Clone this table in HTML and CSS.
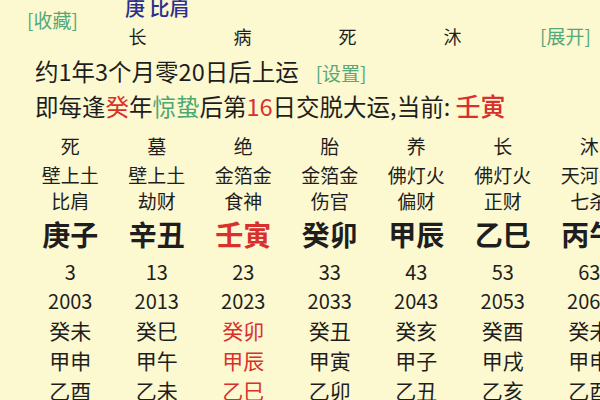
FILE: index.html
```html
<!DOCTYPE html>
<html lang="zh">
<head>
<meta charset="utf-8">
<link rel="stylesheet" href="styles.css">
</head>
<body>
<div class="page">
  <div class="head">
    <div class="fav">[收藏]</div>
    <div class="stem">庚 比肩</div>
    <div class="states">
      <span>长</span><span>病</span><span>死</span><span>沐</span>
    </div>
    <div class="expand">[展开]</div>
  </div>
  <div class="line1">约1年3个月零20日后上运<span class="set">[设置]</span></div>
  <div class="line2">即每逢<span class="red">癸</span>年<span class="green">惊蛰</span>后第<span class="red">16</span>日交脱大运,当前: <span class="cur">壬寅</span></div>
  <div class="grid">
    <div class="col">
      <div class="st">死</div><div class="ny">壁上土</div><div class="ss">比肩</div><div class="gz">庚子</div>
      <div class="num age">3</div><div class="num year">2003</div><div class="yr">癸未</div><div class="yr">甲申</div><div class="yr">乙酉</div>
    </div>
    <div class="col">
      <div class="st">墓</div><div class="ny">壁上土</div><div class="ss">劫财</div><div class="gz">辛丑</div>
      <div class="num age">13</div><div class="num year">2013</div><div class="yr">癸巳</div><div class="yr">甲午</div><div class="yr">乙未</div>
    </div>
    <div class="col now">
      <div class="st">绝</div><div class="ny">金箔金</div><div class="ss">食神</div><div class="gz">壬寅</div>
      <div class="num age">23</div><div class="num year">2023</div><div class="yr">癸卯</div><div class="yr">甲辰</div><div class="yr">乙巳</div>
    </div>
    <div class="col">
      <div class="st">胎</div><div class="ny">金箔金</div><div class="ss">伤官</div><div class="gz">癸卯</div>
      <div class="num age">33</div><div class="num year">2033</div><div class="yr">癸丑</div><div class="yr">甲寅</div><div class="yr">乙卯</div>
    </div>
    <div class="col">
      <div class="st">养</div><div class="ny">佛灯火</div><div class="ss">偏财</div><div class="gz">甲辰</div>
      <div class="num age">43</div><div class="num year">2043</div><div class="yr">癸亥</div><div class="yr">甲子</div><div class="yr">乙丑</div>
    </div>
    <div class="col">
      <div class="st">长</div><div class="ny">佛灯火</div><div class="ss">正财</div><div class="gz">乙巳</div>
      <div class="num age">53</div><div class="num year">2053</div><div class="yr">癸酉</div><div class="yr">甲戌</div><div class="yr">乙亥</div>
    </div>
    <div class="col">
      <div class="st">沐</div><div class="ny">天河水</div><div class="ss">七杀</div><div class="gz">丙午</div>
      <div class="num age">63</div><div class="num year">2063</div><div class="yr">癸未</div><div class="yr">甲申</div><div class="yr">乙酉</div>
    </div>
  </div>
</div>
</body>
</html>
```

FILE: styles.css
```css
html, body {
  margin: 0;
  padding: 0;
  background: #fcf8d0;
  overflow: hidden;
}
.page {
  width: 600px;
  height: 400px;
  overflow: hidden;
  font-family: "Noto Sans CJK SC", "Noto Sans", sans-serif;
  color: #1e1e1e;
}
.head {
  display: grid;
  grid-template-columns: 85px 420px 1fr;
  grid-template-rows: 22px 34px;
  margin-top: -3px;
}
.fav {
  grid-column: 1;
  grid-row: 1 / 3;
  padding-left: 27px;
  padding-top: 10px;
  font-size: 19px;
  line-height: 26px;
  color: #55a878;
}
.stem {
  grid-column: 2;
  grid-row: 1;
  padding-left: 40px;
  font-size: 20px;
  line-height: 22px;
  color: #2b2f90;
  font-weight: 500;
}
.states {
  grid-column: 2;
  grid-row: 2;
  display: grid;
  grid-template-columns: repeat(4, 105px);
  font-size: 18px;
  line-height: 34px;
  text-align: center;
}
.expand {
  grid-column: 3;
  grid-row: 2;
  font-size: 19px;
  line-height: 34px;
  color: #55a878;
  padding-left: 35px;
}
.line1 {
  padding-left: 35px;
  margin-top: 2px;
  font-size: 23.5px;
  line-height: 32px;
}
.set {
  font-size: 19px;
  color: #55a878;
  margin-left: 17px;
}
.line2 {
  padding-left: 35px;
  font-size: 23.5px;
  line-height: 32px;
  white-space: nowrap;
}
.red { color: #d8302c; }
.green { color: #4ea874; }
.cur {
  color: #d8302c;
  font-size: 25px;
  font-weight: 500;
}
.grid {
  display: grid;
  grid-template-columns: repeat(7, 86.5px);
  padding-left: 27px;
  margin-top: 9px;
  text-align: center;
}
.col > div {
  white-space: nowrap;
}
.st { font-size: 19px; line-height: 30px; }
.ny { font-size: 19px; line-height: 28px; }
.ss { font-size: 19px; line-height: 24px; }
.gz { font-size: 28px; line-height: 42px; font-weight: 700; }
.num { font-size: 20px; line-height: 30px; }
.age { padding-top: 2px; }
.year { line-height: 28px; }
.yr { font-size: 21px; line-height: 30px; }
.now .gz, .now .yr { color: #d8302c; }
```
